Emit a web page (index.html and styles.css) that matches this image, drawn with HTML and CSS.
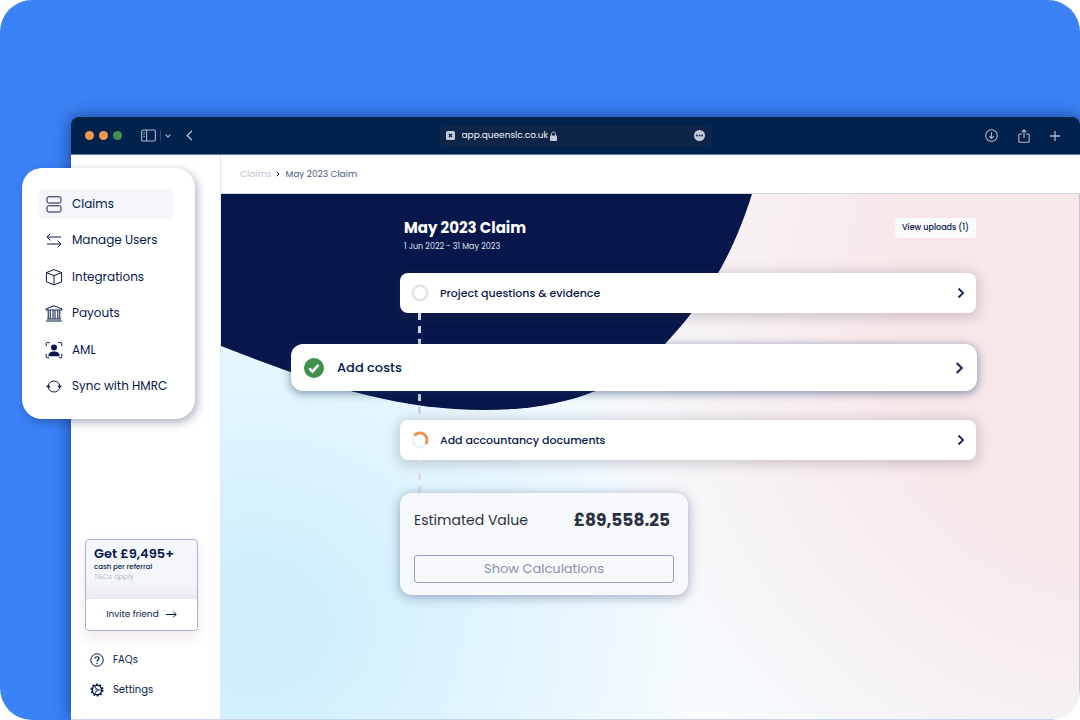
FILE: index.html
```
<!DOCTYPE html>
<html lang="en">
<head>
  <meta charset="UTF-8">
  <title>May 2023 Claim</title>
  <link rel="stylesheet" href="styles.css">
</head>
<body>

  <div class="stage">

    <div class="window">
      <header class="titlebar">
        <div class="tools">
          <span class="dot"></span>
          <span class="dot"></span>
          <span class="dot green"></span>
          <button class="tool sidebar-btn" aria-label="Toggle sidebar">
            <svg width="15" height="13" viewBox="0 0 15 13"><rect x=".6" y="1" width="13.8" height="11" rx="1.5"/><path d="M5.6 1v11M2.4 3.5h1.4M2.4 5.5h1.4M2.4 7.5h1.4"/></svg>
          </button>
          <span class="divider"></span>
          <button class="tool" aria-label="Tab groups">
            <svg width="6" height="4" viewBox="0 0 6 4"><path d="M.6.6L3 3 5.4.6"/></svg>
          </button>
          <button class="tool back" aria-label="Back">
            <svg width="7" height="11" viewBox="0 0 7 11"><path d="M6 .8L1.2 5.5 6 10.2" stroke-width="1.4"/></svg>
          </button>
        </div>

        <div class="address">
          <svg width="9" height="9" viewBox="0 0 9 9"><rect width="9" height="9" rx="1.5" fill="#c3cad9"/><path d="M3 3l3 3M6 3L3 6" stroke="#00204a" stroke-width="1.3"/></svg>
          <input class="url" type="text" aria-label="Address" value="app.queenslc.co.uk">
          <svg width="7" height="10" viewBox="0 0 7 10"><path d="M1.5 5V3a2 2 0 0 1 4 0v2" fill="none" stroke="#aab3c5"/><rect y="4.5" width="7" height="5.5" rx="1" fill="#c3cad9"/></svg>
          <button class="more" aria-label="Page menu">
            <svg width="11" height="11" viewBox="0 0 11 11"><circle cx="5.5" cy="5.5" r="5.5" fill="#c3cad9"/><g fill="#00204a"><circle cx="2.8" cy="5.5" r=".9"/><circle cx="5.5" cy="5.5" r=".9"/><circle cx="8.2" cy="5.5" r=".9"/></g></svg>
          </button>
        </div>

        <div class="tools tools-right">
          <button class="tool" aria-label="Downloads">
            <svg width="13" height="13" viewBox="0 0 13 13"><circle cx="6.5" cy="6.5" r="5.8"/><path d="M6.5 3.3v6M4.2 7.2l2.3 2.3 2.3-2.3"/></svg>
          </button>
          <button class="tool" aria-label="Share">
            <svg width="12" height="14" viewBox="0 0 12 14"><path d="M4 5H1.8a1 1 0 0 0-1 1v6.2a1 1 0 0 0 1 1h8.4a1 1 0 0 0 1-1V6a1 1 0 0 0-1-1H8M6 9V1M3.8 3L6 .8 8.2 3"/></svg>
          </button>
          <button class="tool" aria-label="New tab">
            <svg width="10" height="10" viewBox="0 0 10 10"><path d="M5 0v10M0 5h10" stroke-width="1.3"/></svg>
          </button>
        </div>
      </header>

      <div class="app">
        <aside class="sidebar">
          <div class="referral">
            <div class="referral-text">
              <strong>Get £9,495+</strong>
              <span>cash per referral</span>
              <small>T&amp;Cs apply</small>
            </div>
            <button class="invite">Invite friend
              <svg width="11" height="7" viewBox="0 0 11 7"><path d="M0 3.5h10M7.3.7l2.8 2.8-2.8 2.8"/></svg>
            </button>
          </div>
          <a class="side-link" href="#">
            <svg width="14" height="14" viewBox="0 0 14 14"><circle cx="7" cy="7" r="6.2"/><path d="M5 5.6c0-2.5 4-2.5 4 0C9 7 7 7 7 8.6M7 9.8v1.2" stroke-width="1.2"/></svg>
            FAQs
          </a>
          <a class="side-link" href="#">
            <svg width="14" height="14" viewBox="0 0 14 14"><circle cx="7" cy="7" r="4.7" stroke-width="1.5"/><circle cx="7" cy="7" r="5.8" stroke-width="1.5" stroke-dasharray="1.8 1.84"/><circle cx="7" cy="7" r="1.1" stroke-width=".8"/><path d="M8.2 7h3.3M6.4 6L4.7 3M6.4 8l-1.7 3" stroke-width=".9"/></svg>
            Settings
          </a>
        </aside>

        <main class="main">
          <nav class="crumbs">
            <a href="#">Claims</a>
            <svg width="4" height="6" viewBox="0 0 4 6"><path d="M.8.8L3 3 .8 5.2"/></svg>
            <span>May 2023 Claim</span>
          </nav>

          <div class="canvas">
            <svg class="blob" width="531" height="216" viewBox="0 0 531 216"><path d="M0 0H531C512 60 487 104 444 150 400 196 340 216 264 216 170 216 90 187 0 152Z" fill="#07174b"/></svg>

            <div class="claim">
              <div class="claim-head">
                <div>
                  <h1>May 2023 Claim</h1>
                  <p>1 Jun 2022 - 31 May 2023</p>
                </div>
                <button class="uploads">View uploads (1)</button>
              </div>

              <button class="step">
                <svg class="status" viewBox="0 0 18 18"><circle cx="9" cy="9" r="7.2" fill="none" stroke="#dfe2e8" stroke-width="2.4"/></svg>
                <span>Project questions &amp; evidence</span>
                <svg class="chevron" viewBox="0 0 8 12"><path d="M1.5 1.5L6 6l-4.5 4.5"/></svg>
              </button>
              <div class="link"></div>
              <button class="step active">
                <svg class="status" viewBox="0 0 20 20"><circle cx="10" cy="10" r="10" fill="#3f9149"/><path d="M5.3 10.3l3.2 3.2 6-6.6" fill="none" stroke="#fff" stroke-width="2.6"/></svg>
                <span>Add costs</span>
                <svg class="chevron" viewBox="0 0 8 12"><path d="M1.5 1.5L6 6l-4.5 4.5"/></svg>
              </button>
              <div class="link middle"></div>
              <button class="step">
                <svg class="status" viewBox="0 0 18 18"><circle cx="9" cy="9" r="7.2" fill="none" stroke="#e6f3fb" stroke-width="2.4"/><path d="M3.3 4.6A7.2 7.2 0 0 1 14.9 13.1" fill="none" stroke="#f28e4c" stroke-width="2.8"/></svg>
                <span>Add accountancy documents</span>
                <svg class="chevron" viewBox="0 0 8 12"><path d="M1.5 1.5L6 6l-4.5 4.5"/></svg>
              </button>
              <div class="link light"></div>

              <section class="estimate">
                <div class="estimate-row">
                  <span>Estimated Value</span>
                  <strong>£89,558.25</strong>
                </div>
                <button class="show">Show Calculations</button>
              </section>
            </div>
          </div>
        </main>
      </div>
    </div>

    <!-- floating menu over the window edge -->
    <nav class="menu">
      <a class="menu-item selected" href="#">
        <svg viewBox="0 0 18 18"><rect x="2" y="1.8" width="14" height="6.2" rx="1.6"/><rect x="2" y="10.8" width="14" height="6.2" rx="1.6"/></svg>
        Claims
      </a>
      <a class="menu-item" href="#">
        <svg viewBox="0 0 18 18"><path d="M16 6H2M5.4 2.6L2 6l3.4 3.4M2 13h14M12.6 9.6L16 13l-3.4 3.4"/></svg>
        Manage Users
      </a>
      <a class="menu-item" href="#">
        <svg viewBox="0 0 18 18"><path d="M9 1.6l7.6 3v9.2L9 16.9l-7.6-3.1V4.6zM1.4 4.6L9 7.6l7.6-3M9 7.6v9.3"/></svg>
        Integrations
      </a>
      <a class="menu-item" href="#">
        <svg viewBox="0 0 18 18"><path d="M1 6V5l8-3.2L17 5v1zM1 17h16M2 15h14M3.2 6.4v8.4M5.2 6.4v8.4M8 6.4v8.4M10 6.4v8.4M12.8 6.4v8.4M14.8 6.4v8.4"/></svg>
        Payouts
      </a>
      <a class="menu-item" href="#">
        <svg viewBox="0 0 18 18"><path d="M1.2 5.2V2.6a1 1 0 0 1 1-1h2.6M13.2 1.6h2.6a1 1 0 0 1 1 1v2.6M1.2 13v2.8a1 1 0 0 0 1 1h2M13.8 16.8h2a1 1 0 0 0 1-1V13"/><circle cx="9" cy="6.4" r="3" fill="#07174b" stroke="none"/><path d="M3.4 15.2c0-3.4 2.2-4.8 5.6-4.8s5.6 1.4 5.6 4.8z" fill="#07174b" stroke="none"/></svg>
        AML
      </a>
      <a class="menu-item" href="#">
        <svg viewBox="0 0 18 18"><path d="M3.4 8.2A5.8 5.8 0 0 1 14.7 9M14.6 10.8A5.8 5.8 0 0 1 3.3 10"/><path d="M12.3 8.8h4.8l-2.4 2.8zM.9 10.2h4.8L3.3 7.6z" fill="#07174b" stroke="none"/></svg>
        Sync with HMRC
      </a>
    </nav>

  </div>

</body>
</html>
```
FILE: styles.css
```
* {
  box-sizing: border-box;
}
body {
  margin: 0;
  background: #fff;
  color: #07174b;
  font-family: Poppins, Inter, sans-serif;
}
button, input {
  margin: 0;
  padding: 0;
  border: 0;
  background: none;
  color: inherit;
  font-family: inherit;
}
button {
  cursor: pointer;
}
a {
  color: inherit;
  text-decoration: none;
}
svg {
  display: block;
  flex: none;
}
.stage {
  position: relative;
  display: flex;
  min-height: 100vh;
  padding: 117px 0 0 71px;
  background: #3b82f7;
  border-radius: 32px;
  overflow: hidden;
}
.window {
  flex: 1;
  display: flex;
  flex-direction: column;
  border-radius: 8px 8px 0 0;
  overflow: hidden;
  box-shadow: 0 0 18px rgba(0, 20, 70, 0.6);
}

/* browser bar */
.titlebar {
  display: grid;
  grid-template-columns: 1fr 272px 1fr;
  align-items: center;
  height: 38px;
  padding: 0 14px;
  background: #00224d;
  border-bottom: 1px solid #6d7e98;
}
.tools {
  display: flex;
  align-items: center;
  gap: 5px;
}
.tools-right {
  justify-content: flex-end;
  gap: 20px;
  padding-right: 6px;
}
.dot {
  width: 9px;
  height: 9px;
  border-radius: 50%;
  background: #f4954f;
}
.dot.green {
  background: #43934a;
}
.tool svg {
  fill: none;
  stroke: #b0b9cb;
  stroke-width: 1.1;
}
.sidebar-btn {
  margin-left: 14px;
}
.divider {
  width: 1px;
  height: 12px;
  margin: 0 -1px;
  background: #33496c;
}
.back {
  margin-left: 10px;
}
.address {
  display: flex;
  align-items: center;
  height: 20px;
  padding: 0 7px 0 6px;
  border-radius: 4px;
  background: #0e2547;
}
.url {
  field-sizing: content;
  margin: 0 2px 0 7px;
  color: #f0f3f8;
  font-size: 9px;
}
.more {
  margin-left: auto;
}

/* app */
.app {
  flex: 1;
  display: flex;
  background: #fff;
  border-bottom: 1px solid #c9d6ec;
}
.sidebar {
  flex: none;
  width: 150px;
  display: flex;
  flex-direction: column;
  justify-content: flex-end;
  gap: 16px;
  padding: 0 22px 22px 14px;
  border-right: 1px solid #e4e7ee;
}
.referral {
  margin-bottom: 6px;
  border: 1px solid #aab2ca;
  border-radius: 4px;
  background: linear-gradient(#f4f6fb 0, #f4f6fa 40px, #e8eaee 60px);
  box-shadow: 0 6px 14px rgba(120, 60, 90, 0.12);
}
.referral-text {
  display: flex;
  flex-direction: column;
  height: 59px;
  padding: 6px 8px;
}
.referral strong {
  font-size: 13px;
  line-height: 16px;
  font-weight: 600;
}
.referral span {
  font-size: 7px;
  line-height: 10px;
  font-weight: 500;
}
.referral small {
  color: #b7bccb;
  font-size: 7px;
  line-height: 10px;
}
.invite {
  display: flex;
  align-items: center;
  justify-content: center;
  gap: 7px;
  width: 100%;
  height: 31px;
  border-radius: 4px;
  background: #fff;
  font-size: 9px;
}
.invite svg, .side-link svg {
  fill: none;
  stroke: #07174b;
}
.side-link {
  display: flex;
  align-items: center;
  gap: 9px;
  padding-left: 5px;
  font-size: 10px;
  line-height: 14px;
}
.main {
  flex: 1;
  display: flex;
  flex-direction: column;
}
.crumbs {
  display: flex;
  align-items: center;
  gap: 5px;
  height: 39px;
  padding: 0 19px;
  border-bottom: 1px solid #d5d9e2;
  color: #4b5a82;
  font-size: 9px;
}
.crumbs a {
  color: #bfc4d1;
}
.crumbs svg {
  fill: none;
  stroke: #07174b;
}
.canvas {
  position: relative;
  flex: 1;
  padding: 24px 103px 24px 179px;
  border-right: 1px solid #c5c8d8;
  background:
    radial-gradient(440px 400px at 4% 82%, #cceefd 10%, rgba(204, 238, 253, 0) 100%),
    radial-gradient(560px 600px at 106% 20%, #f7e7e9 42%, rgba(247, 231, 233, 0) 100%),
    #f6fbfe;
}
/* dark shape behind the claim */
.blob {
  position: absolute;
  top: 0;
  left: 0;
}
.claim {
  position: relative;
}
.claim-head {
  display: flex;
  justify-content: space-between;
  align-items: flex-start;
  height: 55px;
  padding-left: 4px;
}
.claim-head h1 {
  margin: 0;
  color: #fff;
  font-size: 15px;
  line-height: 20px;
  font-weight: 700;
}
.claim-head p {
  margin: 3px 0 0;
  color: #dde1ec;
  font-size: 8px;
  line-height: 12px;
}
.uploads {
  height: 20px;
  padding: 0 7px;
  border-radius: 3px;
  background: #f9fafc;
  font-size: 8px;
  line-height: 20px;
  font-weight: 500;
}
.step {
  display: flex;
  align-items: center;
  gap: 11px;
  width: 100%;
  height: 40px;
  padding: 0 11px;
  border-radius: 8px;
  background: #fff;
  box-shadow: 0 2px 12px 3px rgba(60, 50, 70, 0.2);
  font-size: 11px;
  font-weight: 500;
  text-align: left;
}
.step .status {
  width: 18px;
  height: 18px;
}
.step .chevron {
  width: 8px;
  height: 12px;
  margin-left: auto;
  fill: none;
  stroke: #1c2b5e;
  stroke-width: 1.9;
}
.step.active {
  position: relative;
  width: calc(100% + 110px);
  height: 47px;
  margin-left: -109px;
  padding: 0 13px;
  gap: 13px;
  border-radius: 12px;
  font-size: 13px;
  box-shadow: 0 2px 8px 1px rgba(20, 50, 100, 0.45);
}
.step.active .status {
  width: 20px;
  height: 20px;
}
.step.active .chevron {
  width: 9px;
  height: 14px;
}
.link {
  width: 3px;
  height: 31px;
  margin-left: 18px;
  background: repeating-linear-gradient(#d0d5e0 0 7px, transparent 7px 13px);
}
.link.middle {
  height: 29px;
  background: repeating-linear-gradient(transparent 0 3px, #d0d5e0 3px 10px, transparent 10px 13px);
}
.link.light {
  height: 33px;
  background: repeating-linear-gradient(#d9dbe3 0 7px, transparent 7px 13px);
}
.estimate {
  position: relative;
  width: 50%;
  padding: 14px;
  padding-bottom: 12px;
  border-radius: 12px;
  background: #f8f9fc;
  box-shadow: 0 2px 12px rgba(30, 40, 100, 0.4);
}
.estimate-row {
  display: flex;
  align-items: center;
  justify-content: space-between;
  padding-right: 4px;
  margin-bottom: 22px;
  color: #2b3142;
  font-size: 14px;
  line-height: 26px;
}
.estimate-row strong {
  font-size: 17px;
}
.show {
  display: block;
  width: 100%;
  height: 28px;
  border: 1px solid #97a1bc;
  border-radius: 3px;
  color: #8490ab;
  font-size: 13px;
}

.menu {
  position: absolute;
  top: 168px;
  left: 22px;
  width: 173px;
  min-height: 251px;
  display: flex;
  flex-direction: column;
  justify-content: space-between;
  padding: 21px 22px 18px 17px;
  border-radius: 20px;
  background: #fff;
  box-shadow: 2px 3px 10px rgba(0, 20, 60, 0.35);
}
.menu-item {
  display: flex;
  align-items: center;
  gap: 9px;
  height: 30px;
  padding-left: 6px;
  border-radius: 6px;
  font-size: 12px;
  white-space: nowrap;
}
.menu-item.selected {
  background: #f5f6fa;
}
.menu-item svg {
  width: 18px;
  height: 18px;
  fill: none;
  stroke: #07174b;
  stroke-width: 1;
}
```
